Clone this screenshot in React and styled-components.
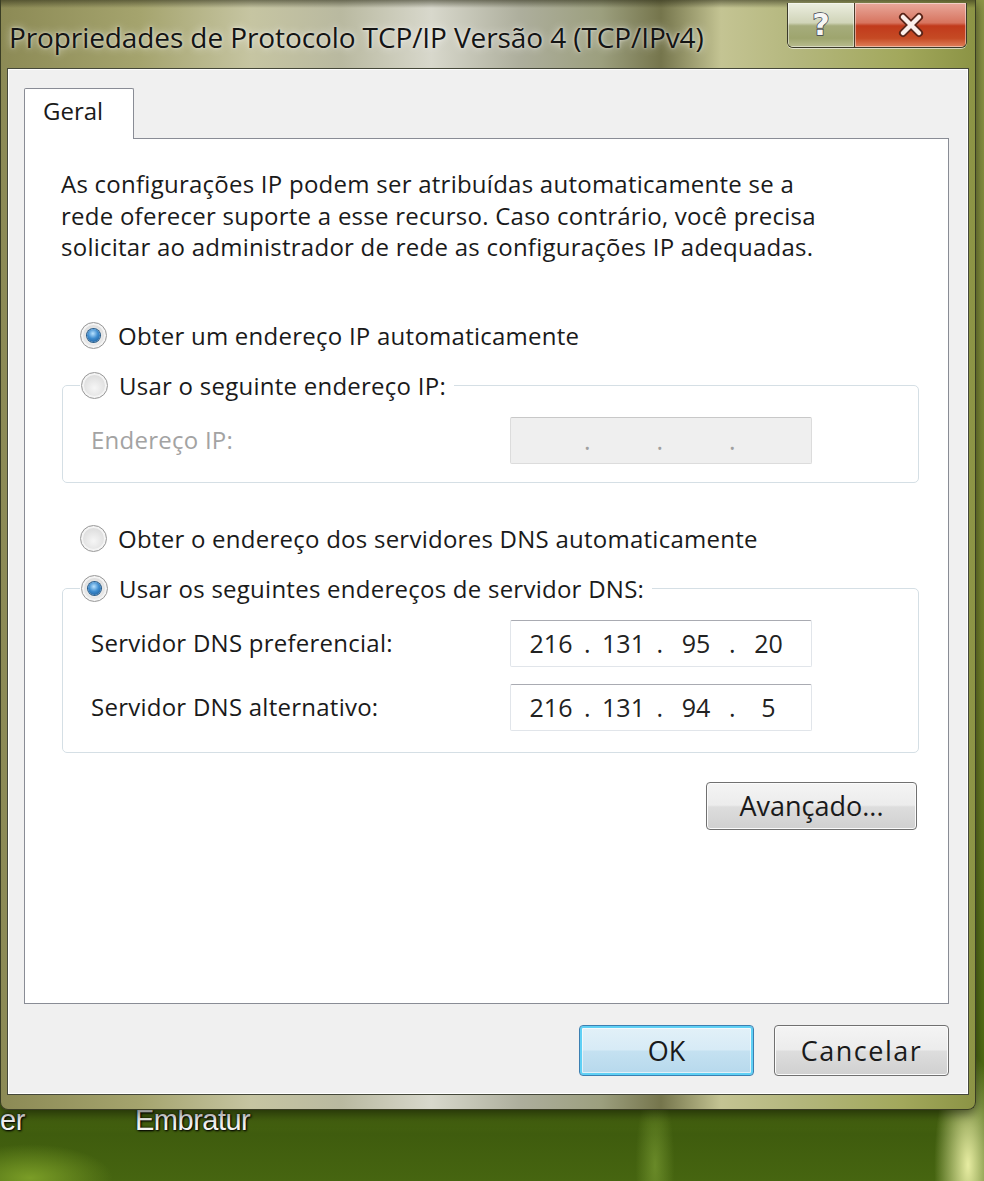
import React from 'react'
import styled, { createGlobalStyle } from 'styled-components'

const GlobalStyle = createGlobalStyle`
  html, body { margin: 0; padding: 0; }
  body {
    width: 984px;
    height: 1181px;
    overflow: hidden;
    font-family: "Open Sans", "Noto Sans", "Liberation Sans", sans-serif;
  }
`

const Desktop = styled.div`
  width: 984px;
  height: 1181px;
  overflow: hidden;
  display: flex;
  flex-direction: column;
  background:
    radial-gradient(ellipse 45px 150px at 968px 1165px, rgba(240,244,170,.95), rgba(240,244,170,0) 75%),
    radial-gradient(ellipse 26px 110px at 655px 1165px, rgba(150,185,70,.45), rgba(150,185,70,0) 75%),
    radial-gradient(ellipse 110px 45px at 30px 1178px, rgba(125,160,40,.95), rgba(125,160,40,0) 75%),
    linear-gradient(180deg, #8d9648 0%, #74822c 55%, #4d6a12 93%, #3f5c0e 96%, #466510 100%);
`

const Window = styled.div`
  width: 976px;
  height: 1110px;
  box-sizing: border-box;
  display: flex;
  flex-direction: column;
  padding: 0 6px 14px 6px;
  border-radius: 0 0 8px 8px;
  border: 1px solid #3a3d24;
  border-top: none;
  background:
    linear-gradient(180deg, rgba(40,40,20,.55) 0px, rgba(40,40,20,0) 8px),
    linear-gradient(90deg, #8c8a55 0px, #a5a46e 140px, #c6c5a2 250px, #b9b9a0 340px,
      #d8d8cc 430px, #adae9c 520px, #9c9f7e 600px, #75754c 660px, #c4c493 720px,
      #b3b67c 800px, #a2a85c 900px, #8b9344 976px);
  box-shadow: 0 4px 12px rgba(0,0,0,.55);
  position: relative;
  z-index: 1;
`

const TitleBar = styled.div`
  height: 68px;
  display: flex;
  justify-content: space-between;
  align-items: flex-start;
`

const Title = styled.div`
  margin-top: 19px;
  padding-left: 2px;
  font-size: 28px;
  line-height: 36px;
  color: #141414;
  letter-spacing: -0.1px;
  text-shadow: 0 0 8px rgba(255,255,255,.75), 0 0 3px rgba(255,255,255,.6);
  white-space: nowrap;
`

const Caption = styled.div`
  display: flex;
  margin-top: 3px;
  margin-right: 2px;
  border: 1px solid #3b3a2a;
  border-top: none;
  border-radius: 0 0 6px 6px;
  overflow: hidden;
  box-shadow: 0 1px 0 rgba(255,255,255,.6);
`

const CaptionButton = styled.div`
  width: ${p => p.$w}px;
  height: 44px;
  display: flex;
  align-items: center;
  justify-content: center;
  box-shadow: inset 0 0 0 1px rgba(255,255,255,.45);
  background: ${p => p.$close
    ? 'linear-gradient(180deg, #e9a99c 0%, #d7745f 45%, #c13a1c 52%, #c54a24 80%, #e0805a 100%)'
    : 'linear-gradient(180deg, #eceee0 0%, #d0d4b8 45%, #a6ac7c 52%, #9ea56e 80%, #b8bc8e 100%)'};
  & + & { border-left: 1px solid #4a3c2a; }
`

const Help = styled.span`
  font-family: "DejaVu Sans", sans-serif;
  font-weight: bold;
  font-size: 30px;
  line-height: 30px;
  color: #f6f6f6;
  -webkit-text-stroke: 1.5px #3d4150;
  paint-order: stroke fill;
`

const Client = styled.div`
  flex: 1;
  display: flex;
  flex-direction: column;
  background: #f0f0f0;
  border: 1px solid #45483a;
  box-shadow: inset 1px 1px 0 #fff, inset -1px -1px 0 #fff;
  padding: 19px 19px 18px 16px;
`

const TabStrip = styled.div`
  display: flex;
  height: 50px;
`

const Tab = styled.div`
  width: 110px;
  box-sizing: border-box;
  padding: 6px 0 0 18px;
  background: #fff;
  border: 1px solid #898c95;
  border-bottom: none;
  border-radius: 2px 2px 0 0;
  font-size: 24px;
  line-height: 32px;
  color: #1a1a1a;
  margin-bottom: -1px;
  position: relative;
  z-index: 1;
`

const Panel = styled.div`
  flex: 1;
  display: flex;
  flex-direction: column;
  background: #fff;
  border: 1px solid #898c95;
  padding: 29px 30px 0 36px;
  font-size: 24px;
  letter-spacing: 0.25px;
  line-height: 32px;
  color: #1a1a1a;
`

const Description = styled.p`
  margin: 0;
  line-height: 31.5px;
  white-space: nowrap;
`

const RadioLine = styled.label`
  display: flex;
  align-items: center;
  gap: 11px;
  height: 32px;
  padding-left: ${p => p.$inset ? 0 : 19}px;
  margin-top: ${p => p.$top || 0}px;
  white-space: nowrap;
`

const RadioDot = styled.span`
  width: 27px;
  height: 27px;
  box-sizing: border-box;
  border-radius: 50%;
  border: 1px solid #9a9a9a;
  flex: none;
  display: flex;
  align-items: center;
  justify-content: center;
  background: radial-gradient(circle at 50% 60%, #f6f6f6 0%, #dadada 75%, #cfcfcf 100%);
  box-shadow: inset 0 0 0 2px #f4f4f4;
  &::after {
    content: '';
    display: ${p => p.$on ? 'block' : 'none'};
    width: 13px;
    height: 13px;
    border-radius: 50%;
    background: radial-gradient(circle at 45% 35%, #b8e2ff 0%, #3e8ccf 45%, #14528e 100%);
    box-shadow: 0 0 0 1px #2a5d8a;
  }
`

const Group = styled.fieldset`
  margin: ${p => p.$top}px 0 0 1px;
  padding: 15px 106px ${p => p.$bottom}px 0;
  border: 1px solid #d5dfe5;
  border-radius: 5px;
  display: grid;
  grid-template-columns: 447px 302px;
  row-gap: 17px;
  align-items: center;
`

const Legend = styled.legend`
  margin-left: 17px;
  padding: 0 8px 0 1px;
`

const FieldLabel = styled.span`
  padding-left: 28px;
  color: ${p => p.$disabled ? '#a3a3a3' : '#1a1a1a'};
`

const IpBox = styled.div`
  display: flex;
  align-items: center;
  height: 47px;
  box-sizing: border-box;
  padding-left: 10px;
  border: 1px solid ${p => p.$disabled ? '#dcdcdc' : '#e1e5ea'};
  border-top-color: ${p => p.$disabled ? '#c8c8c8' : '#a9abb2'};
  border-radius: 2px;
  background: ${p => p.$disabled ? '#efefef' : '#fff'};
  color: ${p => p.$disabled ? '#a0a0a0' : '#222'};
  font-size: 25px;
  letter-spacing: 0;
`

const Octet = styled.span`
  width: 60px;
  text-align: center;
`

const Dot = styled.span`
  width: 12.5px;
  text-align: center;
`

const Button = styled.button`
  width: ${p => p.$w}px;
  height: ${p => p.$h}px;
  box-sizing: border-box;
  font-family: inherit;
  font-size: 27px;
  letter-spacing: ${p => p.$spread || 0}px;
  color: #1a1a1a;
  border-radius: 4px;
  border: 1px solid ${p => p.$primary ? '#3c7fb1' : '#707070'};
  background: ${p => p.$primary
    ? 'linear-gradient(180deg, #e3f1f8 0%, #d7ebf6 48%, #c4e1f1 52%, #b6d8ec 100%)'
    : 'linear-gradient(180deg, #f4f4f4 0%, #ececec 48%, #dddddd 52%, #d0d0d0 100%)'};
  box-shadow: ${p => p.$primary
    ? 'inset 0 0 0 2px #5fd0f5, inset 0 0 0 3px rgba(255,255,255,.6)'
    : 'inset 0 0 0 1px #fbfbfb'};
  padding: 0;
`

const AdvancedButton = styled(Button)`
  align-self: flex-end;
  margin: 29px 1px 0 0;
`

const Footer = styled.div`
  display: flex;
  justify-content: flex-end;
  gap: 20px;
  padding-top: 21px;
`

const IconRow = styled.div`
  display: flex;
  margin-top: -7px;
`

const IconLabel = styled.span`
  width: ${p => p.$w}px;
  font-family: "Liberation Sans", sans-serif;
  font-size: 29px;
  line-height: 34px;
  letter-spacing: -0.5px;
  color: #f4f4f4;
  text-shadow: 1px 1px 2px #000, 0 0 3px #000;
`

function CloseGlyph() {
  return (
    <svg width="28" height="26" viewBox="0 0 28 26">
      <path d="M6 5 L22 21 M22 5 L6 21" stroke="#5a2418" strokeWidth="8" strokeLinecap="round" />
      <path d="M6 5 L22 21 M22 5 L6 21" stroke="#fbeeea" strokeWidth="4.5" strokeLinecap="round" />
    </svg>
  )
}

function IpInput({ parts = ['', '', '', ''], disabled }) {
  return (
    <IpBox $disabled={disabled}>
      <Octet>{parts[0]}</Octet><Dot>.</Dot>
      <Octet>{parts[1]}</Octet><Dot>.</Dot>
      <Octet>{parts[2]}</Octet><Dot>.</Dot>
      <Octet>{parts[3]}</Octet>
    </IpBox>
  )
}

export default function App() {
  return (
    <Desktop>
      <GlobalStyle />
      <Window>
        <TitleBar>
          <Title>Propriedades de Protocolo TCP/IP Versão 4 (TCP/IPv4)</Title>
          <Caption>
            <CaptionButton $w={66}><Help>?</Help></CaptionButton>
            <CaptionButton $w={111} $close><CloseGlyph /></CaptionButton>
          </Caption>
        </TitleBar>
        <Client>
          <TabStrip>
            <Tab>Geral</Tab>
          </TabStrip>
          <Panel>
            <Description>
              As configurações IP podem ser atribuídas automaticamente se a<br />
              rede oferecer suporte a esse recurso. Caso contrário, você precisa<br />
              solicitar ao administrador de rede as configurações IP adequadas.
            </Description>

            <RadioLine $top={57}><RadioDot $on />Obter um endereço IP automaticamente</RadioLine>
            <Group $top={18} $bottom={18}>
              <Legend><RadioLine $inset><RadioDot />Usar o seguinte endereço IP:</RadioLine></Legend>
              <FieldLabel $disabled>Endereço IP:</FieldLabel>
              <IpInput disabled />
            </Group>

            <RadioLine $top={40}><RadioDot />Obter o endereço dos servidores DNS automaticamente</RadioLine>
            <Group $top={18} $bottom={21}>
              <Legend><RadioLine $inset><RadioDot $on />Usar os seguintes endereços de servidor DNS:</RadioLine></Legend>
              <FieldLabel>Servidor DNS preferencial:</FieldLabel>
              <IpInput parts={['216', '131', '95', '20']} />
              <FieldLabel>Servidor DNS alternativo:</FieldLabel>
              <IpInput parts={['216', '131', '94', '5']} />
            </Group>

            <AdvancedButton $w={211} $h={48}>Avançado...</AdvancedButton>
          </Panel>
          <Footer>
            <Button $primary $w={175} $h={51}>OK</Button>
            <Button $w={175} $h={51} $spread={1.5}>Cancelar</Button>
          </Footer>
        </Client>
      </Window>
      <IconRow>
        <IconLabel $w={135}>er</IconLabel>
        <IconLabel $w={200}>Embratur</IconLabel>
      </IconRow>
    </Desktop>
  )
}
